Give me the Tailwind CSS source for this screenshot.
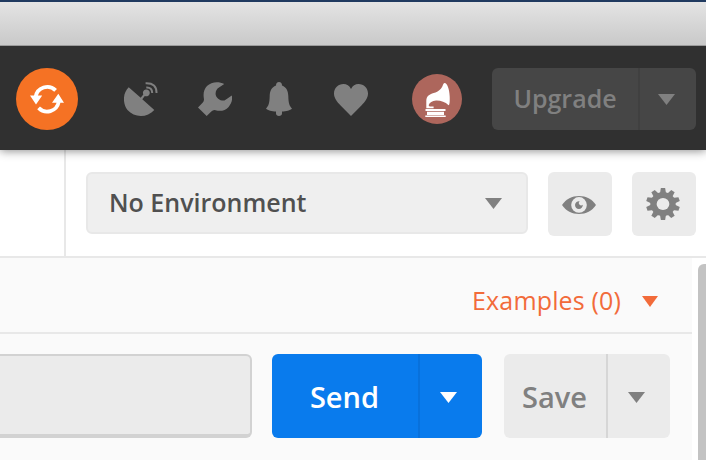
<!DOCTYPE html>
<html lang="en">
<head>
<meta charset="utf-8">
<title>Request builder</title>
<script src="https://cdn.jsdelivr.net/npm/@tailwindcss/browser@4"></script>
</head>
<body class="w-[706px] h-[460px] overflow-hidden bg-white font-['Open_Sans','Noto_Sans',sans-serif] flex flex-col">
<div class="relative z-20 h-[46px] shrink-0 border-t-2 border-t-[#203a60] border-b border-b-[#9b9b9b] bg-linear-to-b from-[#e4e4e4] to-[#c9c9c9]"></div>
<header class="relative z-10 h-[104px] shrink-0 bg-[#303030] flex items-center pl-4 pt-1 pb-0.5 shadow-[0_1px_9px_rgba(0,0,0,0.45)]">
  <button class="size-[62px] rounded-full bg-[#f57224] flex items-center justify-center">
    <svg class="size-9" viewBox="29 81 36 36" fill="none"><path d="M35.6 97A11.8 11.8 0 0 1 55.6 90.4M58.7 102A11.8 11.8 0 0 1 38.6 107.9" stroke="#fff" stroke-width="3.8"/><path d="M30 95.5h12.2L36 104.5zM52 102.7h12L58.3 93.7z" fill="#fff"/></svg>
  </button>
  <svg class="w-[34px] h-[34px] ml-[46px]" viewBox="0 0 34 34" fill="#808080"><path d="M4.7 5.2C-1.4 11-1.5 21.500 3.500 28C10.500 36 23.500 35.800 30.300 27.900L18.300 17.300L20.800 13.900A3.400 3.400 0 1 0 19.300 12.400L16.700 15.800Z"/><path d="M22.300 5.500Q28.200 5.200 28.200 11M21.600 1.200Q32.800.7 32.500 11" fill="none" stroke="#808080" stroke-width="2"/></svg>
  <svg class="w-[34px] h-[34px] ml-10" viewBox="0 0 34 34" fill="#808080"><path d="M26.200 1.900C20.500-.8 13.200-.3 9 4.100C5.700 7.700 5 11.800 6 17.400Q6 19.400 4.600 20.700L0 25.500L8.700 34L13.300 29.600Q15.300 27.500 17.600 28.300C22.500 29.500 27.400 28.700 30.600 24.900C33.900 21 34.600 17.300 33.800 13.600L26.500 18.500C22.500 19.200 18 16.200 17.600 12.200C17.400 9.200 18.800 7 21 5.600Z"/></svg>
  <svg class="w-[26px] h-[34px] ml-[34px]" viewBox="0 0 26 34" fill="#808080"><path d="M13 0C15 0 16 1.500 16 3.400C20.500 5.200 22.200 9 22.300 14C22.500 21 23.200 23.700 26 26.500C24.300 28.500 20 29.300 16 29.500V31.500C16 33 14.700 34 13 34C11.300 34 10 33 10 31.500V29.500C6 29.300 1.700 28.500 0 26.500C2.800 23.700 3.500 21 3.700 14C3.800 9 5.500 5.200 10 3.400C10 1.500 11 0 13 0Z"/></svg>
  <svg class="w-[34px] h-[34px] ml-[42px]" viewBox="0 0 34 34" fill="#808080"><path d="M17 7C15.500 3.700 12.700 2 9.500 2C4.200 2 0 6 0 11.500C0 16.200 3 19.600 6.600 23.600L17 34L27.400 23.600C31 19.600 34 16.200 34 11.500C34 6 29.800 2 24.500 2C21.300 2 18.500 3.700 17 7Z"/></svg>
  <div class="size-[50px] ml-11 rounded-full bg-[#ad665c]">
    <svg class="size-[50px]" viewBox="0 0 50 50" fill="#fff"><path d="M32.500 9C35 8.800 37.500 15 37.700 22.500C37.900 27 37.700 31 36.600 31.200Q31 26.300 24 26.600Q18.200 27 16.600 31.300L17.600 32.400H21.600V34.300H14.300V27C14.300 22.500 17 20.300 21.700 19C27 17.300 29.700 15 31 10.700Q31.600 9 32.500 9Z"/><path d="M13.500 35.100H33.500V37H13.500zM15 37.700H32V41H15zM13.300 41.500H33.700V43H13.300z"/></svg>
  </div>
  <div class="w-[204px] h-[62px] ml-[30px] rounded-md bg-[#464646] flex text-[#808080]">
    <button class="w-[148px] border-r-2 border-[#404040] text-[25px] font-semibold leading-none pb-0.5">Upgrade</button>
    <button class="w-14 flex items-center justify-center pr-[3px]"><svg class="w-[17px] h-[11px]" viewBox="0 0 17 11"><path d="M0 0H17L8.500 11Z" fill="#808080"/></svg></button>
  </div>
</header>
<section class="h-[108px] shrink-0 flex border-b-2 border-[#e8e8e8]">
  <div class="w-[66px] border-r-2 border-[#e8e8e8]"></div>
  <div class="flex items-start pt-[22px] pl-5">
    <div class="w-[442px] h-[62px] rounded-md border-2 border-[#e8e8e8] bg-[#efefef] flex items-center justify-between pl-[21px] pr-6 text-[25px] font-semibold leading-none text-[#505050]"><span class="pb-0.5">No Environment</span><svg class="w-[17px] h-[11px]" viewBox="0 0 17 11"><path d="M0 0H17L8.500 11Z" fill="#808080"/></svg></div>
    <button class="size-16 ml-5 rounded-md bg-[#ebebeb] flex items-center justify-center pr-0.5"><svg class="w-[34px] h-[20px]" viewBox="0 0 34 20"><path d="M0 11C4 5 10 2 17 2S30 5 34 11C30 17 24 20 17 20S4 17 0 11Z" fill="#808080"/><circle cx="17" cy="10.900" r="7.800" fill="#ebebeb"/><path d="M17.600 7.200A3.900 3.900 0 1 0 20.800 10.800A2.200 2.200 0 0 1 17.600 7.200Z" fill="#808080"/></svg></button>
    <button class="size-16 ml-5 rounded-md bg-[#ebebeb] flex items-center justify-center pr-0.5"><svg class="w-9 h-[34px]" viewBox="0 0 34 34" preserveAspectRatio="none"><g fill="#808080"><path id="tooth" d="M15 1H19L20 7V27L19 33H15L14 27V7Z"/><use href="#tooth" transform="rotate(36 17 17)"/><use href="#tooth" transform="rotate(72 17 17)"/><use href="#tooth" transform="rotate(108 17 17)"/><use href="#tooth" transform="rotate(144 17 17)"/><circle cx="17" cy="17" r="12"/></g><circle cx="17" cy="17" r="6" fill="#ebebeb"/></svg></button>
  </div>
</section>
<main class="flex-1 min-h-0 flex">
  <div class="w-[692px] bg-[#fafafa] flex flex-col">
    <div class="h-[76px] shrink-0 border-b-2 border-[#e8e8e8] flex items-center justify-end pt-[13px] pb-px pr-[34px] text-[25px] tracking-[0.15px] leading-none text-[#f26b3a]"><span class="pb-0.5">Examples (0)</span><svg class="w-4 h-[11px] ml-[21px]" viewBox="0 0 16 11"><path d="M0 0H16L8 11Z" fill="#f26b3a"/></svg></div>
    <div class="flex pt-5">
      <div class="w-[252px] h-[84px] rounded-r-md border-t-2 border-r-2 border-b-4 border-[#d2d2d2] bg-[#ebebeb]"></div>
      <div class="w-[210px] h-[84px] ml-5 rounded-md bg-[#097bed] flex text-white">
        <button class="w-[148px] border-r-2 border-[#0871dc] text-[29px] font-semibold leading-none pt-px pr-px">Send</button>
        <button class="flex-1 flex items-center justify-center pt-[3px] pr-[5px]"><svg class="w-[17px] h-[11px]" viewBox="0 0 17 11"><path d="M0 0H17L8.500 11Z" fill="#fff"/></svg></button>
      </div>
      <div class="w-[166px] h-[84px] ml-[22px] rounded-md bg-[#ebebeb] flex text-[#808080]">
        <button class="w-[104px] border-r-2 border-[#d6d6d6] text-[29px] font-semibold leading-none pt-px pr-px">Save</button>
        <button class="flex-1 flex items-center justify-center pt-[3px] pr-[5px]"><svg class="w-[17px] h-[11px]" viewBox="0 0 17 11"><path d="M0 0H17L8.500 11Z" fill="#808080"/></svg></button>
      </div>
    </div>
  </div>
  <div class="flex-1 pt-1.5 pl-1.5"><div class="h-full rounded-tl-md bg-[#c3c3c3]"></div></div>
</main>
</body>
</html>
